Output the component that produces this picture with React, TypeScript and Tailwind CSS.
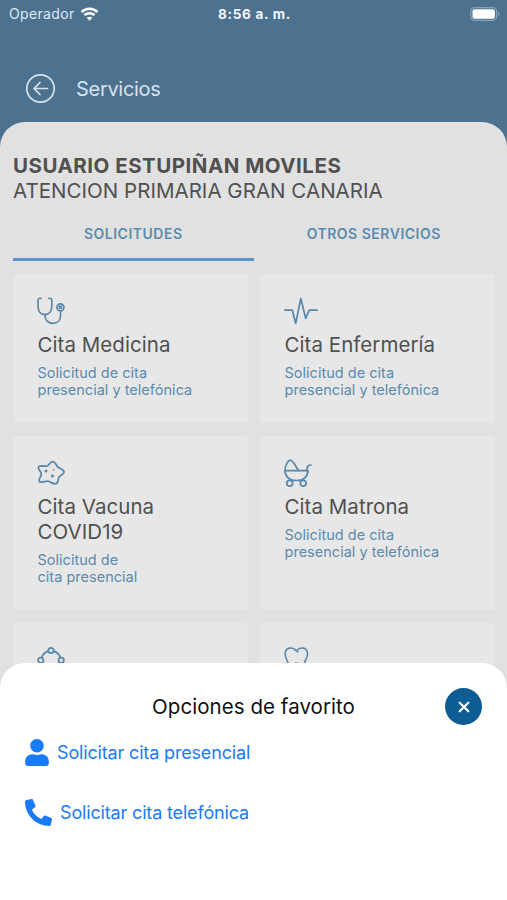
import React from 'react';
import { FaPhoneAlt, FaUser } from 'react-icons/fa';

const StethoscopeIcon = () => (
  <svg width="34" height="30" viewBox="0 0 34 30" fill="none" stroke="currentColor" strokeWidth="1.7" strokeLinecap="round">
    <path d="M4 1.300C1.800 1 1 1.800 1 3.200V9c0 5 2.600 8.600 6.900 8.600s6.900-3.600 6.900-8.600V3.200c0-1.400-.8-2.200-2.900-1.900" />
    <path d="M7.900 17.600c0 5.200 3 8.700 7.800 8.700s7.900-3.200 7.900-7.900V14" />
    <circle cx="23.400" cy="10.300" r="3.500" />
    <circle cx="23.400" cy="10.300" r="1.200" />
  </svg>
);

const PulseIcon = () => (
  <svg width="34" height="30" viewBox="0 0 34 30" fill="none" stroke="currentColor" strokeWidth="1.7" strokeLinejoin="round" strokeLinecap="round">
    <path d="M.8 13.200H8.300L11.700 26.300L16.800 1.500L21.700 21.300L25.300 13.200H33" />
  </svg>
);

const VirusIcon = () => (
  <svg width="34" height="30" viewBox="0 0 34 30" fill="none" stroke="currentColor" strokeWidth="1.8" strokeLinejoin="round">
    <path d="M10 7C12.300 6.300 12.800 2.700 15.600 2.700S19.300 6.700 21 8.200S27 10.300 27 13S22.800 16.200 22 18S21.500 24.800 18.200 24.800S13.500 22.300 10.800 22.100S4.300 24.300 2.500 22.500S4.700 17.300 4.300 14.600S.2 9.800 1.700 7.800S7.500 7.700 10 7z" />
    <circle cx="9" cy="11.900" r="1.500" fill="currentColor" stroke="none" />
    <circle cx="15.400" cy="17" r="1.600" fill="currentColor" stroke="none" />
    <circle cx="16.600" cy="10.900" r=".8" fill="currentColor" stroke="none" />
  </svg>
);

const StrollerIcon = () => (
  <svg width="34" height="30" viewBox="0 0 34 30" fill="none" stroke="currentColor" strokeWidth="1.7" strokeLinejoin="round" strokeLinecap="round">
    <path d="M1 11.700C1 5.500 4.300 1.200 6.500 1.200S10 4.500 14.500 11.700" />
    <path d="M1 11.700H24C24 17.500 19.500 21.500 12.500 21.500S1 17.500 1 11.700z" />
    <path d="M22.600 11.700L23.400 8C23.800 6.300 24.600 6 27 6" />
    <circle cx="5.700" cy="24.200" r="2.900" fill="#e7e7e7" />
    <circle cx="19.200" cy="24.200" r="2.900" fill="#e7e7e7" />
  </svg>
);

const NodesIcon = () => (
  <svg width="34" height="30" viewBox="0 0 34 30" fill="none" stroke="currentColor" strokeWidth="1.8">
    <circle cx="14" cy="4.500" r="2.700" />
    <circle cx="3.800" cy="14.300" r="2.700" />
    <circle cx="24.200" cy="14.300" r="2.700" />
    <path d="M11.300 5.200C8 6.200 5.700 8.500 4.700 11.600M16.700 5.200C20 6.200 22.300 8.500 23.300 11.600" />
  </svg>
);

const ToothIcon = () => (
  <svg width="34" height="30" viewBox="0 0 34 30" fill="none" stroke="currentColor" strokeWidth="1.6" strokeLinejoin="round">
    <path d="M12.500 4.700C8.500.5 1.200.9 1.200 8 1.200 13 3.700 13.500 4.200 18c.5 4 1 8 3 8 2.500 0 1.500-9 5-9s2.500 9 5 9c2 0 2.500-4 3-8 .5-4.500 3.300-5 3.300-10C23.500.9 16.500.5 12.500 4.700zM10 3.200l4.500 2.800" />
  </svg>
);

interface Service {
  title: string[];
  description: string[];
  icon: React.FC;
}

const services: Service[] = [
  { title: ['Cita Medicina'], description: ['Solicitud de cita', 'presencial y telefónica'], icon: StethoscopeIcon },
  { title: ['Cita Enfermería'], description: ['Solicitud de cita', 'presencial y telefónica'], icon: PulseIcon },
  { title: ['Cita Vacuna', 'COVID19'], description: ['Solicitud de', 'cita presencial'], icon: VirusIcon },
  { title: ['Cita Matrona'], description: ['Solicitud de cita', 'presencial y telefónica'], icon: StrollerIcon },
  { title: [], description: [], icon: NodesIcon },
  { title: [], description: [], icon: ToothIcon },
];

const ServiceCard: React.FC<{ service: Service }> = ({ service }) => {
  const Icon = service.icon;

  return (
    <div className="rounded bg-[#e7e7e7] pl-[24.5px] pt-[23px]">
      <div className="-ml-[0.5px] h-9 text-[#5a88ab]">
        <Icon />
      </div>
      {service.title.map((line) => (
        <div key={line} className="whitespace-nowrap text-[20.5px] leading-[24.5px] tracking-[0.05px] text-[#505050]">
          {line}
        </div>
      ))}
      <div className="mt-[6.5px] text-[14.5px] leading-[17px] tracking-[0.02px] text-[#5b8bad]">
        {service.description.map((line) => (
          <div key={line} className="whitespace-nowrap">{line}</div>
        ))}
      </div>
    </div>
  );
};

const StatusBar = () => (
  <div className="grid h-7 grid-cols-3 items-center pl-[9px] pr-[7px] text-[14px] text-[#dce9f3]">
    <div className="-mt-px flex items-center gap-[5px]">
      <span className="tracking-[0.35px]">Operador</span>
      <svg width="19" height="14" viewBox="0 0 18 14" fill="none" stroke="#fff" strokeWidth="2.5">
        <path d="M1 5C5.600.7 12.400.7 17 5" />
        <path d="M3.900 8.200C6.800 5.500 11.200 5.500 14.100 8.200" />
        <path d="M9 13.700L6.200 10.800C7.800 9.400 10.200 9.400 11.800 10.800z" fill="#fff" stroke="none" />
      </svg>
    </div>
    <div className="text-center text-[13.5px] font-bold tracking-[0.7px] text-[#f2f7fb]">8:56 a. m.</div>
    <div className="-mt-px flex justify-end">
      <svg width="30" height="14" viewBox="0 0 30 14">
        <rect x=".7" y=".7" width="26" height="12.600" rx="3.800" fill="none" stroke="#87a3ba" strokeWidth="1.200" />
        <rect x="2.500" y="2.300" width="22.400" height="9.400" rx="2" fill="#fff" />
        <path d="M28.200 4.800c1.800.8 1.800 3.600 0 4.400z" fill="#87a3ba" />
      </svg>
    </div>
  </div>
);

const FavoriteOptions = () => (
  <div className="absolute inset-x-0 bottom-0 h-[237px] rounded-t-[25px] bg-white">
    <div className="grid grid-cols-[1fr_auto_1fr] items-center px-[25px] pt-[25px]">
      <span />
      <h2 className="whitespace-nowrap pt-[2px] text-[20.5px] tracking-[0.05px] text-[#111]">Opciones de favorito</h2>
      <button className="flex size-[37px] items-center justify-center justify-self-end rounded-full bg-[#0d5c94]">
        <svg width="12" height="12" viewBox="0 0 12 12" stroke="#fff" strokeWidth="2.2" strokeLinecap="round">
          <path d="M1.700 1.700L10.300 10.300M10.300 1.700L1.700 10.300" />
        </svg>
      </button>
    </div>
    <div className="flex flex-col pl-[25px] text-[18px] tracking-[-0.16px] text-[#1a7bf8]">
      <button className="flex h-[54px] items-center gap-2 text-left">
        <FaUser className="h-[27px] w-6" />
        <span className="whitespace-nowrap">Solicitar cita presencial</span>
      </button>
      <button className="mt-[6px] flex h-[54px] items-center gap-2 text-left">
        <FaPhoneAlt className="size-[27px]" />
        <span className="whitespace-nowrap">Solicitar cita telefónica</span>
      </button>
    </div>
  </div>
);

export default function App() {
  return (
    <div className="relative h-[900px] w-[507px] overflow-hidden bg-[#4d7290] font-['Inter','Liberation_Sans',sans-serif]">
      <StatusBar />

      <header className="flex h-[94px] items-center gap-5 pl-[25px] pt-[27px] text-[#d9e2ea]">
        <svg width="31" height="31" viewBox="0 0 31 31" fill="none" stroke="currentColor" strokeWidth="1.7" strokeLinecap="round" strokeLinejoin="round">
          <circle cx="15.500" cy="15.500" r="13.700" />
          <path d="M22.500 15.500H9M15 9.500L9 15.500L15 21.500" />
        </svg>
        <h1 className="text-[20px] tracking-[-0.3px]">Servicios</h1>
      </header>

      <main className="h-[778px] rounded-t-[25px] bg-[#e1e1e1] px-[13px] pt-[31px]">
        <div className="whitespace-nowrap text-[20.5px] leading-[25px] text-[#505050]">
          <div className="font-bold tracking-[0.5px]">USUARIO ESTUPIÑAN MOVILES</div>
          <div className="tracking-[0.03px]">ATENCION PRIMARIA GRAN CANARIA</div>
        </div>

        <div className="grid h-[58px] grid-cols-2 text-center text-[14px] font-semibold tracking-[0.5px] text-[#5b8bad]">
          <div className="border-b-[3px] border-[#5a95d6] pt-[20px]">SOLICITUDES</div>
          <div className="pt-[20px]">OTROS SERVICIOS</div>
        </div>

        <div className="mt-[13px] grid grid-cols-[235px_235px] grid-rows-[149px_174px_150px] gap-x-3 gap-y-[13px]">
          {services.map((service, index) => (
            <ServiceCard key={index} service={service} />
          ))}
        </div>
      </main>

      <FavoriteOptions />
    </div>
  );
}
